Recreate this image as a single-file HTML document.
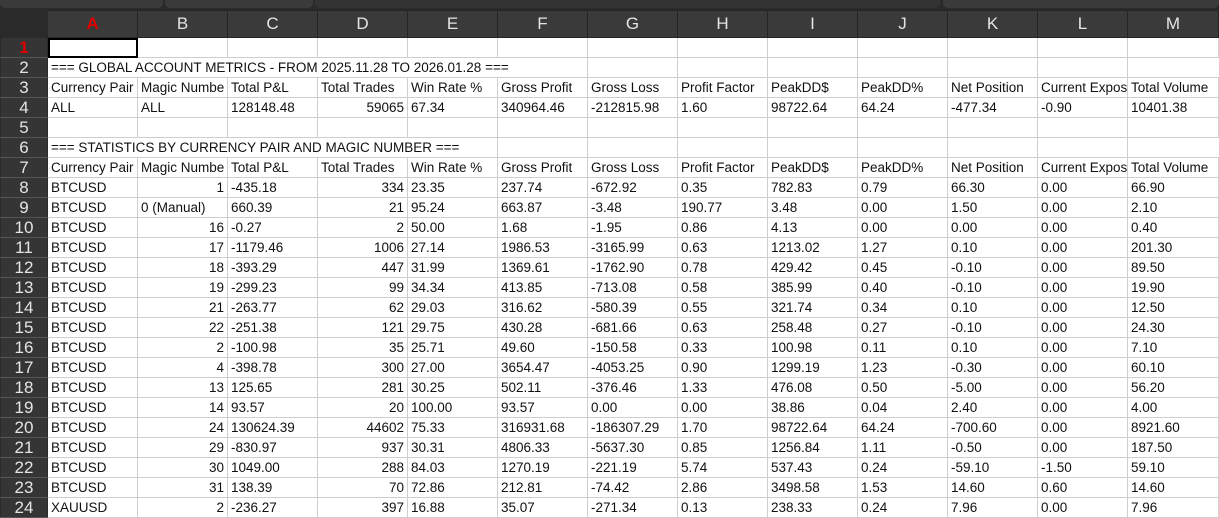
<!DOCTYPE html>
<html><head><meta charset="utf-8"><style>
html,body{margin:0;padding:0;background:#fff;width:1219px;height:517px;overflow:hidden;font-family:"Liberation Sans",sans-serif;}
.top{position:absolute;left:0;top:0;width:1219px;height:10px;background:#2a2a2a;}
.tab{position:absolute;top:0;height:8px;background:#3a3a3a;border-radius:0 0 5px 5px;}
table{position:absolute;left:0;top:10px;width:1218px;border-collapse:collapse;table-layout:fixed;font-size:13.5px;color:#111;}
tr{height:20px;}
td{height:19px;padding:0 3px;border:1px solid #cfcfcf;white-space:nowrap;overflow:hidden;line-height:18px;}
tr.h{height:27px;}
tr.h td{height:26px;line-height:24px;background:#3a3a3a;color:#e4e4e4;text-align:center;font-size:17px;border:1px solid #252525;}
td.rh{background:#353535;color:#e4e4e4;text-align:center;font-size:17px;border:1px solid #2a2a2a;border-bottom:1px solid #555;padding:0;}
tr.h td.c0{background:#2a2a2a;border-color:#2a2a2a;}
.r{text-align:right;}
.red{color:#e00000 !important;font-weight:bold;}
.sel{outline:2px solid #000;outline-offset:-2px;}
td.span{overflow:visible;}
</style></head><body>
<div class="top"><div class="tab" style="left:0;width:163px"></div><div class="tab" style="left:165px;width:148px"></div><div class="tab" style="left:315px;width:625px;background:#333"></div><div class="tab" style="left:943px;width:276px"></div></div>
<table>
<colgroup><col style="width:47px"><col style="width:90px"><col style="width:90px"><col style="width:90px"><col style="width:90px"><col style="width:90px"><col style="width:90px"><col style="width:90px"><col style="width:90px"><col style="width:90px"><col style="width:90px"><col style="width:90px"><col style="width:90px"><col style="width:91px"></colgroup>
<tr class="h"><td class="c0"></td><td class="red">A</td><td>B</td><td>C</td><td>D</td><td>E</td><td>F</td><td>G</td><td>H</td><td>I</td><td>J</td><td>K</td><td>L</td><td>M</td></tr>
<tr><td class="rh red">1</td><td class="sel"></td><td></td><td></td><td></td><td></td><td></td><td></td><td></td><td></td><td></td><td></td><td></td><td></td></tr>
<tr><td class="rh">2</td><td colspan="6" class="span" style="border-right:none">=== GLOBAL ACCOUNT METRICS - FROM 2025.11.28 TO 2026.01.28 ===</td><td></td><td></td><td></td><td></td><td></td><td></td></tr>
<tr><td class="rh">3</td><td>Currency Pair</td><td>Magic Numbe</td><td>Total P&amp;L</td><td>Total Trades</td><td>Win Rate %</td><td>Gross Profit</td><td>Gross Loss</td><td>Profit Factor</td><td>PeakDD$</td><td>PeakDD%</td><td>Net Position</td><td>Current Expos</td><td>Total Volume</td></tr>
<tr><td class="rh">4</td><td>ALL</td><td>ALL</td><td>128148.48</td><td class="r">59065</td><td>67.34</td><td>340964.46</td><td>-212815.98</td><td>1.60</td><td>98722.64</td><td>64.24</td><td>-477.34</td><td>-0.90</td><td>10401.38</td></tr>
<tr><td class="rh">5</td><td></td><td></td><td></td><td></td><td></td><td></td><td></td><td></td><td></td><td></td><td></td><td></td><td></td></tr>
<tr><td class="rh">6</td><td colspan="5" class="span" style="border-right:none">=== STATISTICS BY CURRENCY PAIR AND MAGIC NUMBER ===</td><td></td><td></td><td></td><td></td><td></td><td></td><td></td></tr>
<tr><td class="rh">7</td><td>Currency Pair</td><td>Magic Numbe</td><td>Total P&amp;L</td><td>Total Trades</td><td>Win Rate %</td><td>Gross Profit</td><td>Gross Loss</td><td>Profit Factor</td><td>PeakDD$</td><td>PeakDD%</td><td>Net Position</td><td>Current Expos</td><td>Total Volume</td></tr>
<tr><td class="rh">8</td><td>BTCUSD</td><td class="r">1</td><td>-435.18</td><td class="r">334</td><td>23.35</td><td>237.74</td><td>-672.92</td><td>0.35</td><td>782.83</td><td>0.79</td><td>66.30</td><td>0.00</td><td>66.90</td></tr>
<tr><td class="rh">9</td><td>BTCUSD</td><td>0 (Manual)</td><td>660.39</td><td class="r">21</td><td>95.24</td><td>663.87</td><td>-3.48</td><td>190.77</td><td>3.48</td><td>0.00</td><td>1.50</td><td>0.00</td><td>2.10</td></tr>
<tr><td class="rh">10</td><td>BTCUSD</td><td class="r">16</td><td>-0.27</td><td class="r">2</td><td>50.00</td><td>1.68</td><td>-1.95</td><td>0.86</td><td>4.13</td><td>0.00</td><td>0.00</td><td>0.00</td><td>0.40</td></tr>
<tr><td class="rh">11</td><td>BTCUSD</td><td class="r">17</td><td>-1179.46</td><td class="r">1006</td><td>27.14</td><td>1986.53</td><td>-3165.99</td><td>0.63</td><td>1213.02</td><td>1.27</td><td>0.10</td><td>0.00</td><td>201.30</td></tr>
<tr><td class="rh">12</td><td>BTCUSD</td><td class="r">18</td><td>-393.29</td><td class="r">447</td><td>31.99</td><td>1369.61</td><td>-1762.90</td><td>0.78</td><td>429.42</td><td>0.45</td><td>-0.10</td><td>0.00</td><td>89.50</td></tr>
<tr><td class="rh">13</td><td>BTCUSD</td><td class="r">19</td><td>-299.23</td><td class="r">99</td><td>34.34</td><td>413.85</td><td>-713.08</td><td>0.58</td><td>385.99</td><td>0.40</td><td>-0.10</td><td>0.00</td><td>19.90</td></tr>
<tr><td class="rh">14</td><td>BTCUSD</td><td class="r">21</td><td>-263.77</td><td class="r">62</td><td>29.03</td><td>316.62</td><td>-580.39</td><td>0.55</td><td>321.74</td><td>0.34</td><td>0.10</td><td>0.00</td><td>12.50</td></tr>
<tr><td class="rh">15</td><td>BTCUSD</td><td class="r">22</td><td>-251.38</td><td class="r">121</td><td>29.75</td><td>430.28</td><td>-681.66</td><td>0.63</td><td>258.48</td><td>0.27</td><td>-0.10</td><td>0.00</td><td>24.30</td></tr>
<tr><td class="rh">16</td><td>BTCUSD</td><td class="r">2</td><td>-100.98</td><td class="r">35</td><td>25.71</td><td>49.60</td><td>-150.58</td><td>0.33</td><td>100.98</td><td>0.11</td><td>0.10</td><td>0.00</td><td>7.10</td></tr>
<tr><td class="rh">17</td><td>BTCUSD</td><td class="r">4</td><td>-398.78</td><td class="r">300</td><td>27.00</td><td>3654.47</td><td>-4053.25</td><td>0.90</td><td>1299.19</td><td>1.23</td><td>-0.30</td><td>0.00</td><td>60.10</td></tr>
<tr><td class="rh">18</td><td>BTCUSD</td><td class="r">13</td><td>125.65</td><td class="r">281</td><td>30.25</td><td>502.11</td><td>-376.46</td><td>1.33</td><td>476.08</td><td>0.50</td><td>-5.00</td><td>0.00</td><td>56.20</td></tr>
<tr><td class="rh">19</td><td>BTCUSD</td><td class="r">14</td><td>93.57</td><td class="r">20</td><td>100.00</td><td>93.57</td><td>0.00</td><td>0.00</td><td>38.86</td><td>0.04</td><td>2.40</td><td>0.00</td><td>4.00</td></tr>
<tr><td class="rh">20</td><td>BTCUSD</td><td class="r">24</td><td>130624.39</td><td class="r">44602</td><td>75.33</td><td>316931.68</td><td>-186307.29</td><td>1.70</td><td>98722.64</td><td>64.24</td><td>-700.60</td><td>0.00</td><td>8921.60</td></tr>
<tr><td class="rh">21</td><td>BTCUSD</td><td class="r">29</td><td>-830.97</td><td class="r">937</td><td>30.31</td><td>4806.33</td><td>-5637.30</td><td>0.85</td><td>1256.84</td><td>1.11</td><td>-0.50</td><td>0.00</td><td>187.50</td></tr>
<tr><td class="rh">22</td><td>BTCUSD</td><td class="r">30</td><td>1049.00</td><td class="r">288</td><td>84.03</td><td>1270.19</td><td>-221.19</td><td>5.74</td><td>537.43</td><td>0.24</td><td>-59.10</td><td>-1.50</td><td>59.10</td></tr>
<tr><td class="rh">23</td><td>BTCUSD</td><td class="r">31</td><td>138.39</td><td class="r">70</td><td>72.86</td><td>212.81</td><td>-74.42</td><td>2.86</td><td>3498.58</td><td>1.53</td><td>14.60</td><td>0.60</td><td>14.60</td></tr>
<tr><td class="rh">24</td><td>XAUUSD</td><td class="r">2</td><td>-236.27</td><td class="r">397</td><td>16.88</td><td>35.07</td><td>-271.34</td><td>0.13</td><td>238.33</td><td>0.24</td><td>7.96</td><td>0.00</td><td>7.96</td></tr>
</table>
</body></html>
